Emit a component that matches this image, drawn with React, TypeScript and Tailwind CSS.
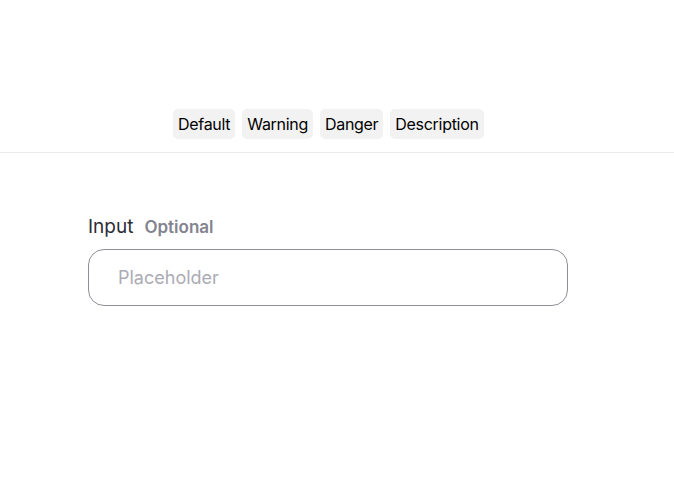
const variants = ['Default', 'Warning', 'Danger', 'Description'];

export default function App() {
	return (
		<div className="min-h-[504px] bg-white font-['Inter',sans-serif]">
			<div className="flex gap-[7px] border-b border-[#ececec] pt-[109px] pb-[13px] pl-[173px]">
				{variants.map(v => (
					<button
						className="h-[30px] rounded-[5px] bg-[#f2f2f2] px-[5px] text-[16px] leading-[30px] tracking-[-0.3px] text-black"
						key={v}
						type="button"
					>
						{v}
					</button>
				))}
			</div>

			<div className="pt-[61px] pl-[88px]">
				<label className="flex items-baseline gap-[11px]">
					<span className="text-[19px] leading-[26px] text-[#2c2c34]">Input</span>
					<span className="text-[17px] font-semibold text-[#83838f]">Optional</span>
				</label>
				<input
					className="mt-[8px] h-[57px] w-[480px] rounded-[16px] border border-[#8e8e96] px-[29px] text-[18px] text-[#2c2c34] outline-none placeholder:text-[#ababb4]"
					placeholder="Placeholder"
					type="text"
				/>
			</div>
		</div>
	);
}
